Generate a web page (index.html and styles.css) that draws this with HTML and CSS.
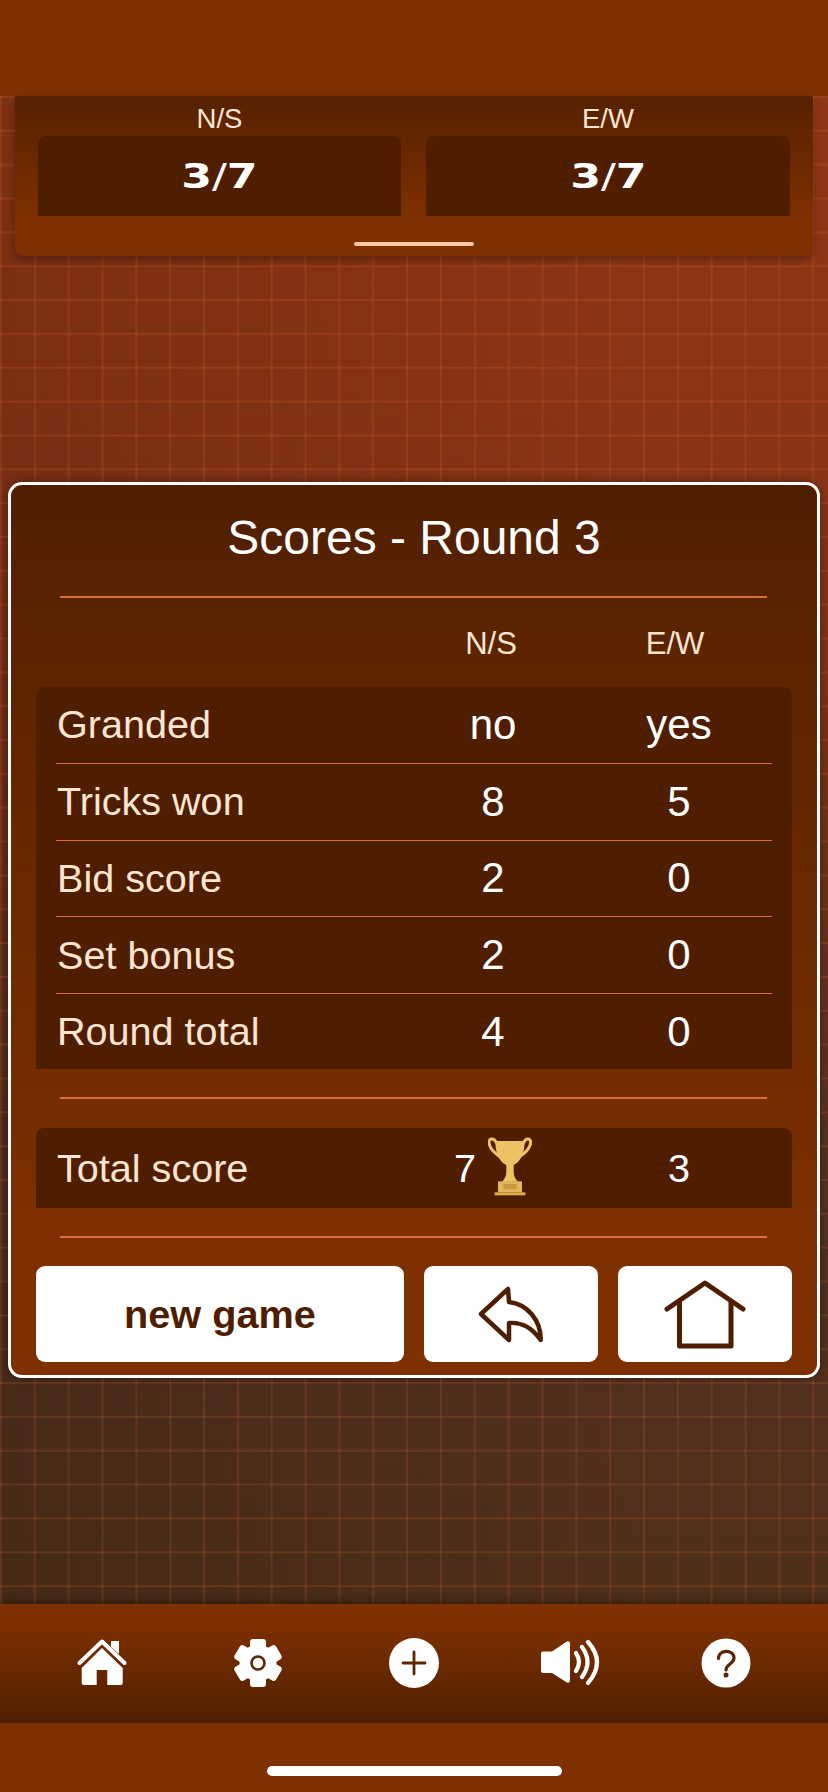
FILE: index.html
```html
<!DOCTYPE html>
<html lang="en">
<head>
<meta charset="utf-8">
<title>Scores - Round 3</title>
<link rel="stylesheet" href="styles.css">
</head>
<body>
<div class="app">
  <div class="topbar"></div>
  <main class="board">
    <section class="tally">
      <div class="tally-cols">
        <div class="tally-col"><div class="tally-label">N/S</div><div class="tally-box"><span class="tally-num">3<span class="slash">/</span>7</span></div></div>
        <div class="tally-col"><div class="tally-label">E/W</div><div class="tally-box"><span class="tally-num">3<span class="slash">/</span>7</span></div></div>
      </div>
      <div class="handle"></div>
    </section>
    <section class="modal">
      <h1 class="title">Scores - Round 3</h1>
      <div class="rule rule-inset"></div>
      <div class="head-row"><span></span><span class="cell">N/S</span><span class="cell">E/W</span></div>
      <div class="table">
        <div class="row"><span class="name">Granded</span><span class="cell">no</span><span class="cell">yes</span></div>
        <div class="row"><span class="name">Tricks won</span><span class="cell">8</span><span class="cell">5</span></div>
        <div class="row"><span class="name">Bid score</span><span class="cell">2</span><span class="cell">0</span></div>
        <div class="row"><span class="name">Set bonus</span><span class="cell">2</span><span class="cell">0</span></div>
        <div class="row"><span class="name">Round total</span><span class="cell">4</span><span class="cell">0</span></div>
      </div>
      <div class="rule rule-gap"></div>
      <div class="table">
        <div class="row row-total">
          <span class="name">Total score</span>
          <span class="cell cell-win">7
            <svg class="trophy" viewBox="0 0 132 177" aria-hidden="true">
              <path d="M24 16C20 4 2 2 3 16C4 38 24 52 40 62M108 16C112 4 128 2 128 16C127 38 106 52 90 62" fill="none" stroke="#ecc264" stroke-width="9" stroke-linecap="round"/>
              <path d="M22 12H110C110 60 90 78 77 84V104C77 118 83 128 91 134H41C49 128 55 118 55 104V84C42 78 22 60 22 12Z" fill="#ecc264"/>
              <rect x="30" y="133" width="72" height="33" fill="#e3b659"/>
              <rect x="46" y="141" width="40" height="16" rx="4" fill="#c9983f"/>
              <rect x="20" y="166" width="92" height="9" fill="#dcae50"/>
            </svg>
          </span>
          <span class="cell">3</span>
        </div>
      </div>
      <div class="rule rule-gap rule-last"></div>
      <div class="actions">
        <button class="btn btn-wide">new game</button>
        <button class="btn" aria-label="back">
          <svg class="ico-back" viewBox="0 0 68 58" aria-hidden="true"><path d="M4 29L31 4L32 17C50 19 64 35 63.7 55C54 41 44 37 32 38V55Z" fill="none" stroke="#4f1e00" stroke-width="4.5" stroke-linejoin="round"/></svg>
        </button>
        <button class="btn" aria-label="home">
          <svg class="ico-house" viewBox="0 0 84 71" aria-hidden="true"><path d="M4 30L42 4L80 30" fill="none" stroke="#4f1e00" stroke-width="5" stroke-linecap="round" stroke-linejoin="round"/><path d="M16.5 22V67H68V22" fill="none" stroke="#4f1e00" stroke-width="5" stroke-linejoin="round"/></svg>
        </button>
      </div>
    </section>
  </main>
  <nav class="nav">
    <div class="nav-item">
      <svg class="ico-nav-home" viewBox="0 0 52 50" aria-hidden="true">
        <path d="M3.5 25L26 3.5L48.5 25" fill="none" stroke="#fff" stroke-width="4" stroke-linecap="round" stroke-linejoin="round"/>
        <path d="M35 9V3H43V16Z" fill="#fff"/>
        <path d="M26 10L46.7 30V45Q46.7 47 44.7 47H31.3V32H20.7V47H7.7Q5.7 47 5.7 45V30Z" fill="#fff"/>
      </svg>
    </div>
    <div class="nav-item">
      <svg class="ico-nav" viewBox="-25 -25 50 50" aria-hidden="true">
        <circle r="18.5" fill="#fff"/>
        <g fill="#fff">
          <rect x="-8" y="-24" width="16" height="14" rx="3"/>
          <rect x="-8" y="-24" width="16" height="14" rx="3" transform="rotate(60)"/>
          <rect x="-8" y="-24" width="16" height="14" rx="3" transform="rotate(120)"/>
          <rect x="-8" y="-24" width="16" height="14" rx="3" transform="rotate(180)"/>
          <rect x="-8" y="-24" width="16" height="14" rx="3" transform="rotate(240)"/>
          <rect x="-8" y="-24" width="16" height="14" rx="3" transform="rotate(300)"/>
        </g>
        <circle r="6.5" fill="none" stroke="#5f2500" stroke-width="2.6"/>
      </svg>
    </div>
    <div class="nav-item">
      <svg class="ico-nav" viewBox="0 0 50 50" aria-hidden="true">
        <circle cx="25" cy="25" r="25" fill="#fff"/>
        <path d="M14 25H36M25 14V36" stroke="#5f2500" stroke-width="2.8" stroke-linecap="round"/>
      </svg>
    </div>
    <div class="nav-item">
      <svg class="ico-speaker" viewBox="0 0 60 46" aria-hidden="true">
        <path d="M3 11.5H12L26 2Q30 0 30 4V40Q30 44 26 42L12 33H3Q1 33 1 31V13.5Q1 11.5 3 11.5Z" fill="#fff"/>
        <path d="M36 13Q42 22 36 31M42 7Q53 22 42 37M48 2Q66 22 48 43" fill="none" stroke="#fff" stroke-width="4.2" stroke-linecap="round"/>
      </svg>
    </div>
    <div class="nav-item">
      <svg class="ico-nav" viewBox="0 0 50 50" aria-hidden="true">
        <circle cx="25" cy="25" r="24.5" fill="#fff"/>
        <path d="M17.5 20.5C17.5 11 33 11 33 20C33 26 25 26 25 32" fill="none" stroke="#5f2500" stroke-width="3.2" stroke-linecap="round"/>
        <circle cx="25" cy="37" r="2.5" fill="#5f2500"/>
      </svg>
    </div>
  </nav>
  <div class="homebar"><div class="indicator"></div></div>
</div>
</body>
</html>
```
FILE: styles.css
```css
* { box-sizing: border-box; }
html, body { margin: 0; padding: 0; }
body {
  font-family: "Liberation Sans", Arial, sans-serif;
  background: #7f3000;
}
.app {
  width: 828px;
  height: 1792px;
  display: flex;
  flex-direction: column;
  overflow: hidden;
}
.topbar { height: 96px; background: #7f3000; flex: none; }
.board {
  flex: 1;
  display: flex;
  flex-direction: column;
  background-color: #6a3018;
  background-image:
    linear-gradient(to right, rgba(255, 115, 55, .15) 1.5px, transparent 1.5px),
    linear-gradient(to bottom, rgba(255, 115, 55, .15) 1.5px, transparent 1.5px),
    linear-gradient(to right, rgba(0, 0, 0, .12), rgba(0, 0, 0, 0) 80%),
    linear-gradient(to bottom, #8e3616 0, #8b3515 20%, #7d3218 38%, #563020 72%, #4f2f1a 100%);
  background-size: 33.85px 33.85px, 33.85px 33.85px, 100% 100%, 100% 100%;
}

.tally {
  height: 160px;
  margin: 0 15px;
  padding: 0 23px;
  flex: none;
  background: linear-gradient(to bottom, #552100 0, #7f3000 78%);
  border-radius: 0 0 8px 8px;
  box-shadow: 0 4px 8px rgba(0, 0, 0, .3);
}
.tally-cols { display: grid; grid-template-columns: 363px 364px; column-gap: 25px; }
.tally-label {
  height: 40px;
  display: flex;
  align-items: center;
  justify-content: center;
  padding-top: 5px;
  font-size: 27.5px;
  color: #ffe5d0;
}
.tally-box {
  height: 80px;
  display: flex;
  align-items: center;
  justify-content: center;
  background: #4f1e00;
  border-radius: 8px 8px 0 0;
}
.tally-num {
  font-family: "DejaVu Sans", sans-serif;
  font-weight: 700;
  font-size: 34px;
  color: #fff;
  display: inline-block;
  transform: scaleX(1.3);
}
.slash { font-weight: 400; }
.handle {
  width: 120px;
  height: 4px;
  margin: 26px auto 0;
  background: #ffc9a8;
  border-radius: 2px;
}

.modal {
  margin: 226px 8px 0;
  height: 896px;
  flex: none;
  padding: 0 25px;
  border: 3px solid #fff;
  border-radius: 14px;
  background: linear-gradient(to bottom, #4f1e00 0, #5a2300 14%, #762d00 70%, #7f3000 86%);
  box-shadow: 0 0 9px rgba(0, 0, 0, .4);
}
.title {
  height: 104px;
  margin: 0 0 7px;
  display: flex;
  align-items: center;
  justify-content: center;
  font-size: 48px;
  font-weight: 400;
  color: #fff;
}
.rule { height: 2px; margin-left: 24px; margin-right: 25px; background: #d8703a; }
.rule-gap { margin-top: 28px; margin-bottom: 29px; }
.rule-last { margin-bottom: 28px; }
.head-row,
.row {
  display: grid;
  align-items: center;
}
.row { grid-template-columns: 1fr 186px 186px; }
.head-row {
  grid-template-columns: 1fr 184px 184px;
  height: 89px;
  padding: 3px 25px 0 20px;
  font-size: 31px;
  color: #ffe5d0;
}
.table {
  padding: 0 20px;
  background: #4f1e00;
  border-radius: 8px 8px 0 0;
}
.row {
  height: 76.75px;
  border-bottom: 1px solid #d8703a;
  font-size: 39.6px;
}
.row:last-child { border-bottom: 0; height: 75px; }
.row-total.row-total { height: 80px; }
.name { color: #ffe5d0; padding-left: 1px; }
.row .cell { color: #fff; font-size: 42px; }
.row .cell-win { font-size: 39.6px; }
.row-total .cell { font-size: 39.6px; }
.cell { text-align: center; }
.cell-win {
  display: flex;
  align-items: center;
  justify-content: center;
  gap: 12px;
}
.trophy { width: 44px; height: 59px; flex: none; margin-bottom: 3px; }

.actions { display: flex; gap: 20px; }
.btn {
  width: 174px;
  height: 96px;
  flex: none;
  display: flex;
  align-items: center;
  justify-content: center;
  padding: 0;
  border: 0;
  border-radius: 9px;
  background: #fff;
  font-family: inherit;
  font-size: 39.7px;
  font-weight: 700;
  color: #4f1e00;
}
.btn-wide { width: 368px; }
.ico-back { width: 68px; height: 58px; }
.ico-house { width: 84px; height: 71px; }

.nav {
  height: 119px;
  flex: none;
  display: flex;
  padding: 0 24px;
  background: linear-gradient(to bottom, #7f3000 0, #772d00 30%, #5a2300 80%, #4f1e00 100%);
  box-shadow: 0 -3px 8px rgba(0, 0, 0, .35);
}
.nav-item {
  width: 156px;
  flex: none;
  display: flex;
  align-items: center;
  justify-content: center;
  padding-bottom: 1px;
}
.ico-nav { width: 50px; height: 50px; }
.ico-nav-home { width: 52px; height: 50px; }
.ico-speaker { width: 60px; height: 46px; }

.homebar {
  height: 69px;
  flex: none;
  display: flex;
  justify-content: center;
  padding-top: 43px;
  background: #7f3000;
}
.indicator { width: 295px; height: 10px; border-radius: 5px; background: #fff; }
```
